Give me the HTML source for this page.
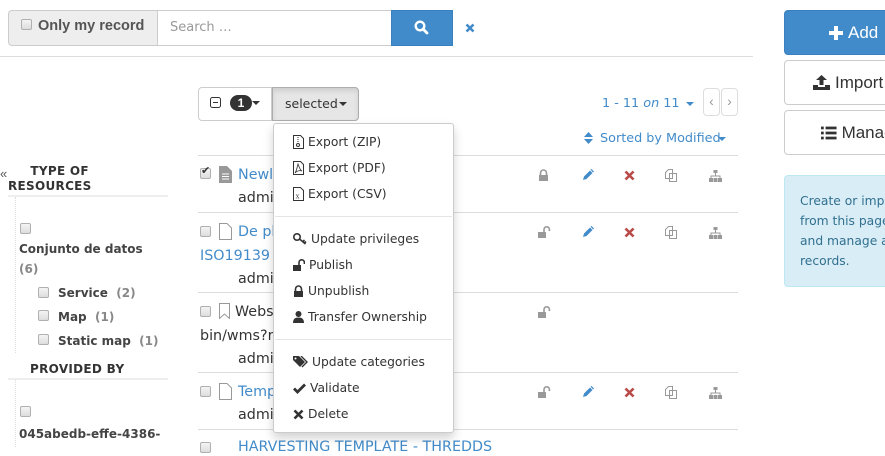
<!DOCTYPE html>
<html><head><meta charset="utf-8"><style>
*{margin:0;padding:0;box-sizing:border-box}
body{width:885px;height:447px;overflow:hidden;background:#fff;font-family:"Liberation Sans",sans-serif;color:#333;position:relative}
.a{position:absolute;white-space:nowrap}
.hr{position:absolute;height:1px;background:#ddd}
.cb{position:absolute;width:11px;height:11px;border:1px solid #b0b0b0;border-radius:2px;background:linear-gradient(#f4f4f4,#ddd)}
.blue{color:#428bca}
.t{font-family:"DejaVu Sans",sans-serif;font-size:14.3px;line-height:18px}
.f{font-family:"DejaVu Sans",sans-serif;font-size:12px;font-weight:bold;color:#444}
.g{color:#888}
.menu{position:absolute;left:273px;top:123px;width:181px;height:310px;background:#fff;border:1px solid #ccc;border-radius:3px;box-shadow:0 5px 10px rgba(0,0,0,.18)}
.mi{position:absolute;left:19px;font-family:"DejaVu Sans",sans-serif;font-size:12.3px;color:#333;white-space:nowrap;display:flex;align-items:center;gap:4px}
.mi svg{flex:none}
.btn{position:absolute;border:1px solid #ccc;border-radius:4px;background:#fff;font-size:17px;color:#333;display:flex;align-items:center;justify-content:center;gap:5px}
.dj{font-family:"DejaVu Sans",sans-serif}
</style></head><body>

<div class="a" style="left:8px;top:10px;width:150px;height:36px;background:#eee;border:1px solid #ccc;border-radius:4px 0 0 4px"></div>
<div class="cb" style="left:21px;top:19px"></div>
<div class="a" style="left:38px;top:18px;font-size:14.5px;font-weight:bold;color:#555">Only my record</div>
<div class="a" style="left:157px;top:10px;width:235px;height:36px;border:1px solid #ccc;border-left:none"></div>
<div class="a dj" style="left:170px;top:20px;font-size:13px;color:#999">Search …</div>
<div class="a" style="left:391px;top:10px;width:62px;height:36px;background:#428bca;border:1px solid #3a7fc0"></div>
<svg class="a" style="left:414px;top:20px" width="15" height="15" viewBox="0 0 15 15"><circle cx="6" cy="6" r="4.3" fill="none" stroke="#fff" stroke-width="2.4"/><line x1="9" y1="9" x2="13" y2="13" stroke="#fff" stroke-width="2.8" stroke-linecap="round"/></svg>
<svg class="a" style="left:465px;top:23px" width="10" height="10" viewBox="0 0 10 10"><path d="M1.5 1.5L8.5 8.5M8.5 1.5L1.5 8.5" stroke="#428bca" stroke-width="2.6"/></svg>
<div class="hr" style="left:0;top:56px;width:753px"></div>

<div class="btn" style="left:784px;top:10px;width:120px;height:45px;background:#428bca;border-color:#3a7fc0;color:#fff;justify-content:flex-start;padding-left:44px">
<svg width="14" height="14" viewBox="0 0 14 14"><path d="M5 0h4v5h5v4H9v5H5V9H0V5h5z" fill="#fff"/></svg>Add</div>
<div class="btn" style="left:784px;top:60px;width:120px;height:45px;justify-content:flex-start;padding-left:28px">
<svg width="17" height="15" viewBox="0 0 17 15"><path d="M8.5 0L3 5h3.5v5h4V5H14z M0 10h5v2h7v-2h5v5H0z" fill="#333"/></svg>Import</div>
<div class="btn" style="left:784px;top:110px;width:120px;height:45px;justify-content:flex-start;padding-left:36px">
<svg width="17" height="14" viewBox="0 0 17 14"><rect x="0" y="0" width="3" height="3" fill="#333"/><rect x="0" y="5.5" width="3" height="3" fill="#333"/><rect x="0" y="11" width="3" height="3" fill="#333"/><rect x="5" y="0" width="12" height="3" fill="#333"/><rect x="5" y="5.5" width="12" height="3" fill="#333"/><rect x="5" y="11" width="12" height="3" fill="#333"/></svg>Manage</div>
<div class="a" style="left:784px;top:175px;width:120px;height:112px;background:#d9edf7;border:1px solid #bce8f1;border-radius:4px"></div>
<div class="a dj" style="left:800px;top:191px;font-size:12.3px;line-height:20px;color:#31708f">Create or import<br>from this page<br>and manage all<br>records.</div>

<div class="a" style="left:0;top:166px;font-size:13px;color:#555">«</div>
<div class="a dj" style="left:8px;top:164px;font-size:12px;font-weight:bold;color:#333;line-height:15px;letter-spacing:.3px">&nbsp;&nbsp;&nbsp;&nbsp;&nbsp;TYPE OF<br>RESOURCES</div>
<div class="hr" style="left:8px;top:195px;width:160px;height:2px;background:#eee"></div>
<div class="a" style="left:15px;top:197px;height:156px;border-left:1px dotted #ddd"></div>
<div class="cb" style="left:20px;top:223px"></div>
<div class="a f" style="left:19px;top:242px">Conjunto de datos</div>
<div class="a f g" style="left:19px;top:262px">(6)</div>
<div class="cb" style="left:38px;top:287px"></div><div class="a f" style="left:58px;top:286px">Service <span class="g">&nbsp;(2)</span></div>
<div class="cb" style="left:38px;top:310px"></div><div class="a f" style="left:58px;top:310px">Map <span class="g">&nbsp;(1)</span></div>
<div class="cb" style="left:38px;top:334px"></div><div class="a f" style="left:58px;top:334px">Static map <span class="g">&nbsp;(1)</span></div>
<div class="a dj" style="left:30px;top:362px;font-size:12px;font-weight:bold;letter-spacing:.3px">PROVIDED BY</div>
<div class="hr" style="left:8px;top:378px;width:160px;height:2px;background:#eee"></div>
<div class="a" style="left:15px;top:380px;height:67px;border-left:1px dotted #ddd"></div>
<div class="cb" style="left:20px;top:406px"></div>
<div class="a f" style="left:19px;top:427px">045abedb-effe-4386-</div>

<div class="a" style="left:198px;top:87px;width:74px;height:34px;border:1px solid #ccc;border-radius:4px 0 0 4px"></div>
<svg class="a" style="left:210px;top:97px" width="11" height="11" viewBox="0 0 11 11"><rect x=".5" y=".5" width="10" height="10" rx="2" fill="none" stroke="#333"/><line x1="3" y1="5.5" x2="8" y2="5.5" stroke="#333"/></svg>
<div class="a" style="left:230px;top:95px;width:22px;height:16px;border-radius:8px;background:#333;color:#fff;font-size:12px;font-weight:bold;text-align:center;line-height:16px">1</div>
<div class="a" style="left:252px;top:101px;border:4px solid transparent;border-top-color:#333;border-bottom:none"></div>
<div class="a" style="left:272px;top:87px;width:87px;height:34px;border:1px solid #adadad;border-radius:0 4px 4px 0;background:#e6e6e6;box-shadow:inset 0 3px 5px rgba(0,0,0,.1)"></div>
<div class="a dj" style="left:285px;top:96px;font-size:12.5px">selected</div>
<div class="a" style="left:339px;top:102px;border:4px solid transparent;border-top-color:#333;border-bottom:none"></div>

<div class="a blue dj" style="left:602px;top:96px;font-size:12.8px">1 - 11 <i>on</i> 11</div>
<div class="a" style="left:686px;top:102px;border:4px solid transparent;border-top-color:#428bca;border-bottom:none"></div>
<div class="a" style="left:703px;top:88px;width:17px;height:28px;border:1px solid #ddd;border-radius:4px;color:#999;font-size:14px;text-align:center;line-height:25px">‹</div>
<div class="a" style="left:721px;top:88px;width:17px;height:28px;border:1px solid #ddd;border-radius:4px;color:#999;font-size:14px;text-align:center;line-height:25px">›</div>

<svg class="a" style="left:584px;top:132px" width="9" height="12" viewBox="0 0 9 12"><path d="M4.5 0L9 5H0zM0 7h9L4.5 12z" fill="#428bca"/></svg>
<div class="a blue dj" style="left:600px;top:131px;font-size:12.8px">Sorted by Modified</div>
<div class="a" style="left:718px;top:137px;border:4px solid transparent;border-top-color:#428bca;border-bottom:none"></div>

<div class="hr" style="left:198px;top:155px;width:540px"></div>
<div class="hr" style="left:198px;top:212px;width:540px"></div>
<div class="hr" style="left:198px;top:292px;width:540px"></div>
<div class="hr" style="left:198px;top:372px;width:540px"></div>
<div class="hr" style="left:198px;top:429px;width:540px"></div>

<div class="cb" style="left:200px;top:168px"></div>
<div class="a" style="left:201px;top:164px;font-size:11px;color:#333">✔</div>
<svg class="a" style="left:219px;top:166px" width="13" height="17" viewBox="0 0 13 17"><path d="M0 0h8l5 5v12H0z" fill="#999"/><path d="M3 8h7M3 10.5h7M3 13h7" stroke="#fff"/></svg>
<div class="a t blue" style="left:238px;top:166px">Newly created record</div>
<div class="a t" style="left:238px;top:189px">admin admin</div>

<div class="cb" style="left:200px;top:226px"></div>
<svg class="a" style="left:219px;top:223px" width="13" height="17" viewBox="0 0 13 17"><path d="M.5 .5h7.5l4.5 4.5v11.5H.5z" fill="none" stroke="#999"/></svg>
<div class="a t blue" style="left:238px;top:223px">De plantilla de datos en</div>
<div class="a t blue" style="left:200px;top:247px">ISO19139</div>
<div class="a t" style="left:238px;top:270px">admin admin</div>

<div class="cb" style="left:200px;top:306px"></div>
<svg class="a" style="left:219px;top:303px" width="11" height="16" viewBox="0 0 11 16"><path d="M.5 .5h10v15l-5-4.5-5 4.5z" fill="none" stroke="#999"/></svg>
<div class="a t" style="left:235px;top:303px">Website http://demo/cgi-</div>
<div class="a t" style="left:200px;top:327px">bin/wms?request</div>
<div class="a t" style="left:238px;top:350px">admin admin</div>

<div class="cb" style="left:200px;top:386px"></div>
<svg class="a" style="left:219px;top:383px" width="13" height="17" viewBox="0 0 13 17"><path d="M.5 .5h7.5l4.5 4.5v11.5H.5z" fill="none" stroke="#999"/></svg>
<div class="a t blue" style="left:238px;top:383px">Template for ISO19139</div>
<div class="a t" style="left:238px;top:406px">admin admin</div>

<div class="cb" style="left:200px;top:442px"></div>
<div class="a t blue" style="left:238px;top:438px">HARVESTING TEMPLATE - THREDDS</div>

<svg width="0" height="0" style="position:absolute"><defs>
<g id="lock"><path d="M2.5 6V4a3 3 0 0 1 6 0v2" fill="none" stroke="#999" stroke-width="1.6"/><rect x="1" y="6" width="9" height="6" fill="#999"/></g>
<g id="unlock"><path d="M6 6V3.5a2.7 2.7 0 0 1 5.4 0V5" fill="none" stroke="#999" stroke-width="1.6"/><rect x="0" y="6" width="8" height="6" fill="#999"/></g>
<g id="lockd"><path d="M2.5 6V4a3 3 0 0 1 6 0v2" fill="none" stroke="#333" stroke-width="1.6"/><rect x="1" y="6" width="9" height="6" fill="#333"/></g>
<g id="unlockd"><path d="M6 6V3.5a2.7 2.7 0 0 1 5.4 0V5" fill="none" stroke="#333" stroke-width="1.6"/><rect x="0" y="6" width="8" height="6" fill="#333"/></g>
<g id="pen"><path d="M1 11l1-3.5 6-6 2.5 2.5-6 6z" fill="#428bca"/><path d="M8.5 0.5l1-0.5 2.5 2.5-1 1z" fill="#428bca"/></g>
<g id="x"><path d="M1.5 1.5l8 8M9.5 1.5l-8 8" stroke="#b94a48" stroke-width="2.6"/></g>
<g id="cp"><path d="M.5 3.5l3-3h4v9h-7z M4.5 4.5h7v8h-7z" fill="#fff" stroke="#999"/></g>
<g id="sm"><rect x="4.5" y="0" width="4" height="3" fill="#999"/><path d="M6.5 3v3M2 8V6h9v2" fill="none" stroke="#999"/><rect x="0" y="8" width="4" height="4" fill="#999"/><rect x="4.5" y="8" width="4" height="4" fill="#999"/><rect x="9" y="8" width="4" height="4" fill="#999"/></g>
</defs></svg>
<svg class="a" style="left:538px;top:169px" width="12" height="13"><use href="#lock"/></svg>
<svg class="a" style="left:582px;top:169px" width="13" height="13"><use href="#pen"/></svg>
<svg class="a" style="left:624px;top:170px" width="12" height="12"><use href="#x"/></svg>
<svg class="a" style="left:665px;top:169px" width="13" height="14"><use href="#cp"/></svg>
<svg class="a" style="left:709px;top:170px" width="14" height="13"><use href="#sm"/></svg>

<svg class="a" style="left:538px;top:226px" width="13" height="13"><use href="#unlock"/></svg>
<svg class="a" style="left:582px;top:226px" width="13" height="13"><use href="#pen"/></svg>
<svg class="a" style="left:624px;top:227px" width="12" height="12"><use href="#x"/></svg>
<svg class="a" style="left:665px;top:226px" width="13" height="14"><use href="#cp"/></svg>
<svg class="a" style="left:709px;top:227px" width="14" height="13"><use href="#sm"/></svg>

<svg class="a" style="left:538px;top:306px" width="13" height="13"><use href="#unlock"/></svg>

<svg class="a" style="left:538px;top:386px" width="13" height="13"><use href="#unlock"/></svg>
<svg class="a" style="left:582px;top:386px" width="13" height="13"><use href="#pen"/></svg>
<svg class="a" style="left:624px;top:387px" width="12" height="12"><use href="#x"/></svg>
<svg class="a" style="left:665px;top:386px" width="13" height="14"><use href="#cp"/></svg>
<svg class="a" style="left:709px;top:387px" width="14" height="13"><use href="#sm"/></svg>

<div class="menu">
<div class="mi" style="top:11px"><svg width="11" height="14" viewBox="0 0 11 14"><path d="M.5 .5h7l3 3v10H.5z" fill="#fff" stroke="#333"/><path d="M5 2v6" stroke="#333" stroke-dasharray="1 1"/><circle cx="5" cy="10" r="1.5" fill="none" stroke="#333"/></svg>Export (ZIP)</div>
<div class="mi" style="top:37px"><svg width="11" height="14" viewBox="0 0 11 14"><path d="M.5 .5h7l3 3v10H.5z" fill="#fff" stroke="#333"/><path d="M5 3c1 3 2 6 4 7-3-1-5 0-7 2 2-3 2-6 3-9z" fill="none" stroke="#333" stroke-width=".8"/></svg>Export (PDF)</div>
<div class="mi" style="top:63px"><svg width="11" height="14" viewBox="0 0 11 14"><path d="M.5 .5h7l3 3v10H.5z" fill="#fff" stroke="#333"/><text x="2.5" y="11.5" font-size="8" font-family="Liberation Serif" fill="#333">x</text></svg>Export (CSV)</div>
<div class="a" style="left:1px;top:92px;width:177px;height:1px;background:#e5e5e5"></div>
<div class="mi" style="top:108px"><svg width="14" height="12" viewBox="0 0 14 12"><circle cx="4" cy="4" r="3.2" fill="none" stroke="#333" stroke-width="1.6"/><path d="M6.5 6l6 5M10 8.5l1.5-1.5M11.5 10l1.5-1.5" stroke="#333" stroke-width="1.6"/></svg>Update privileges</div>
<div class="mi" style="top:134px"><svg width="12" height="12"><use href="#unlockd"/></svg>Publish</div>
<div class="mi" style="top:160px"><svg width="11" height="13"><use href="#lockd"/></svg>Unpublish</div>
<div class="mi" style="top:186px"><svg width="11" height="12" viewBox="0 0 11 12"><circle cx="5.5" cy="3" r="3" fill="#333"/><path d="M0 12c0-4 2-5.5 5.5-5.5S11 8 11 12z" fill="#333"/></svg>Transfer Ownership</div>
<div class="a" style="left:1px;top:215px;width:177px;height:1px;background:#e5e5e5"></div>
<div class="mi" style="top:231px"><svg width="15" height="13" viewBox="0 0 15 13"><path d="M0 0h6l6 6-5 5-7-7z" fill="#333"/><circle cx="2.5" cy="2.5" r="1" fill="#fff"/><path d="M8 0l6 6-5 5" fill="none" stroke="#333" stroke-width="1.4"/></svg>Update categories</div>
<div class="mi" style="top:257px"><svg width="13" height="11" viewBox="0 0 13 11"><path d="M1 5.5l3.5 3.5L12 1.5" fill="none" stroke="#333" stroke-width="2.8"/></svg>Validate</div>
<div class="mi" style="top:283px"><svg width="11" height="11" viewBox="0 0 11 11"><path d="M1.5 1.5l8 8M9.5 1.5l-8 8" stroke="#333" stroke-width="2.6"/></svg>Delete</div>
</div>
</body></html>
